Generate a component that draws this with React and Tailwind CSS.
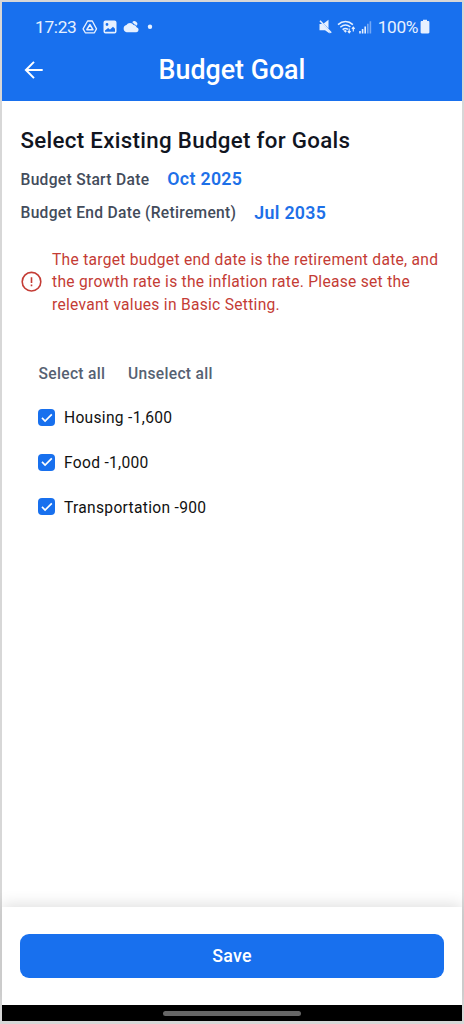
import React from "react";

const budgets = ["Housing -1,600", "Food -1,000", "Transportation -900"];

function StatusBar() {
  return (
    <div className="flex h-[49px] items-center pl-[33px] pr-[32px] text-[#e6f0ff]">
      <span className="w-[46.5px] whitespace-nowrap text-[17.3px] leading-[20px] tracking-[-0.3px]">17:23</span>
      <svg className="h-[16px] w-[72px] shrink-0" viewBox="0 0 72 16" fill="none">
        <path d="M5.600 2h4.700l4.200 7.900-2.100 3.900H3.300L1.100 9.900Z" stroke="currentColor" strokeWidth="1.300" strokeLinejoin="round" />
        <path d="m7.900 5.600 3 5.100h-6Z" stroke="currentColor" strokeWidth="1.600" strokeLinejoin="round" />
        <path fillRule="evenodd" d="M23.500 1.500h9a2 2 0 0 1 2 2v9a2 2 0 0 1-2 2h-9a2 2 0 0 1-2-2v-9a2 2 0 0 1 2-2Zm-.5 11.200h10V9.700L31 7.700l-3 2.900-1.900-1.600-3.100 2.600Zm2-8.600a1.400 1.400 0 1 0 0 2.800 1.400 1.400 0 0 0 0-2.800Z" fill="currentColor" />
        <path d="M44.600 13.300a3.700 3.700 0 0 1-.2-7.200 4.100 4.100 0 0 1 7.200 0 3.400 3.400 0 0 1 3 2.100 2.600 2.600 0 0 1-.2 5.100Z" fill="currentColor" />
        <path d="M50.200 3.300a2.800 2.800 0 0 1 4.500 3.400 4.700 4.700 0 0 0-2.600-1.500 5.600 5.600 0 0 0-1.900-1.900Z" fill="currentColor" />
        <circle cx="68" cy="7.800" r="2.200" fill="currentColor" />
      </svg>
      <div className="ml-auto flex items-center">
        <svg className="h-[16px] w-[55px]" viewBox="0 0 55 16" fill="none">
          <path d="M2.500 4.900h3l7.200 7.900v1.600L8 11.300H2.500ZM6.700 4.600l4.800-3.800v8.800Z" fill="currentColor" />
          <path d="m3 1.800 11.200 12" stroke="currentColor" strokeWidth="1.500" />
          <path d="M21 5.600c4.600-4 10.300-4 14.900 0M23.300 8.200c3.200-2.700 7.100-2.700 10.100-.2M25.600 10.600c1.700-1.400 3.700-1.500 5.300-.3" stroke="currentColor" strokeWidth="1.500" />
          <path d="m26.200 11.400 2.200 2.300 1.400-1.500-1-1.200Z" fill="currentColor" />
          <path d="M32.200 9.600v4.100m-1.400-1.500 1.400 1.600 1.400-1.600M36.300 12.500V8.200m-1.400 1.600 1.400-1.600 1.400 1.600" stroke="currentColor" strokeWidth="1.200" />
          <path d="M43 12v2.500M45.600 10v4.500M48.200 7.400v7.100" stroke="currentColor" strokeWidth="1.600" />
          <path d="M50.800 4.700v9.800M53.400 2.200v12.300" stroke="currentColor" strokeWidth="1.600" opacity=".45" />
        </svg>
        <span className="ml-[6px] text-[17.3px] leading-[20px] tracking-[-0.4px]">100%</span>
        <svg className="ml-[2px] h-[15px] w-[10px]" viewBox="0 0 10 15">
          <path d="M3 .8h4v1.300h1.200c.7 0 1.200.5 1.200 1.200v9.900c0 .7-.5 1.200-1.200 1.200H1.800c-.7 0-1.200-.5-1.200-1.200V3.300c0-.7.5-1.200 1.200-1.200H3Z" fill="currentColor" />
        </svg>
      </div>
    </div>
  );
}

function BudgetRow({ label }) {
  return (
    <label className="flex h-[44.6px] items-center gap-[9px]">
      <span className="flex size-[17px] items-center justify-center rounded-[4px] bg-[#1870ee]">
        <svg className="h-[10px] w-[12px]" viewBox="0 0 12 10" fill="none">
          <path d="m1 4.900 3.100 3.100 6.700-6.600" stroke="white" strokeWidth="1.700" />
        </svg>
      </span>
      <span className="pt-[1.500px] text-[15.6px] leading-[22px] tracking-[0.3px] text-[#111]">{label}</span>
    </label>
  );
}

export default function App() {
  return (
    <div className="flex h-[1024px] w-[464px] flex-col border-2 border-b-[3px] border-[#d7d7d7] bg-white font-['Roboto',sans-serif]">
      <header className="h-[99px] shrink-0 bg-[#1870ee]">
        <StatusBar />
        <div className="grid h-[37px] grid-cols-[64px_1fr_64px] items-center">
          <svg className="ml-[22px] h-[20px] w-[20px]" viewBox="0 0 20 20" fill="none" stroke="white" strokeWidth="2">
            <path d="M18.700 10H2.500M10 1.900 1.900 10l8.100 8.100" />
          </svg>
          <h1 className="whitespace-nowrap text-center text-[26.8px] leading-[36px] font-medium text-white">Budget Goal</h1>
        </div>
      </header>
      <main className="min-h-0 flex-1 px-[18.5px] pt-[25px]">
        <h2 className="text-[22.3px] leading-[28px] font-medium tracking-[0.31px] text-[#11151f]">Select Existing Budget for Goals</h2>
        <div className="mt-[9px] flex h-[34px] items-center gap-[18px] text-[15.6px] font-medium text-[#434c5b]">
          <span className="pt-px tracking-[0.3px]">Budget Start Date</span>
          <span className="pb-[2px] text-[17.8px] font-semibold tracking-[0.3px] text-[#1d70e8]">Oct 2025</span>
        </div>
        <div className="flex h-[33px] items-center gap-[18px] text-[15.6px] font-medium text-[#434c5b]">
          <span className="pt-px tracking-[0.3px]">Budget End Date (Retirement)</span>
          <span className="text-[17.8px] font-semibold tracking-[0.3px] text-[#1d70e8]">Jul 2035</span>
        </div>
        <div className="mt-[19px] flex items-center gap-[10.500px] text-[#c43c35]">
          <svg className="h-[22px] w-[21px] shrink-0" viewBox="0 0 21 22" fill="none" stroke="currentColor" strokeWidth="1.600">
            <circle cx="10.500" cy="10.700" r="9.300" />
            <path d="M10.500 6.200v5.800M10.500 13.600v1.600" />
          </svg>
          <p className="whitespace-nowrap text-[15.6px] leading-[22.3px] tracking-[0.28px]">
            The target budget end date is the retirement date, and<br />
            the growth rate is the inflation rate. Please set the<br />
            relevant values in Basic Setting.
          </p>
        </div>
        <div className="mt-[47.500px] flex h-[22px] items-center gap-[22.500px] pl-[18px] text-[15.6px] font-medium tracking-[0.32px] text-[#566172]">
          <button>Select all</button>
          <button>Unselect all</button>
        </div>
        <div className="mt-[10px] pl-[17.500px]">
          {budgets.map((label) => <BudgetRow key={label} label={label} />)}
        </div>
      </main>
      <footer className="h-[98px] shrink-0 bg-white px-[18.300px] pt-[26.500px] shadow-[0_-3px_14px_rgba(0,0,0,0.12)]">
        <button className="h-[44.500px] w-full rounded-[9px] bg-[#1870ee] pt-px text-[17.8px] font-medium tracking-[0.32px] text-white">Save</button>
      </footer>
      <div className="flex h-[16px] shrink-0 items-center justify-center bg-black">
        <div className="h-[5px] w-[138px] rounded-full bg-[#666]" />
      </div>
    </div>
  );
}
